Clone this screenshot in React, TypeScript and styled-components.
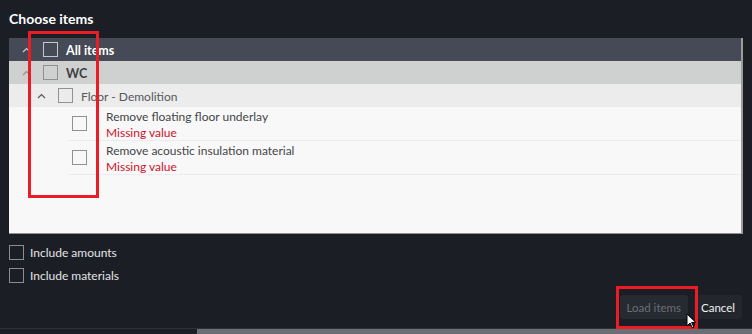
import styled, { createGlobalStyle } from "styled-components";

const GlobalStyle = createGlobalStyle`
  html, body {
    margin: 0;
    padding: 0;
    background: #1b1e25;
    font-family: Lato, "Open Sans", sans-serif;
  }
  * { box-sizing: border-box; }
`;

const Page = styled.div`
  position: relative;
  width: 752px;
  height: 334px;
  overflow: hidden;
  display: flex;
  flex-direction: column;
`;

const Title = styled.h1`
  margin: 0;
  padding: 10px 9px 0;
  height: 38px;
  font-size: 14px;
  line-height: 18px;
  font-weight: 700;
  color: #ffffff;
`;

const Panel = styled.div`
  margin: 0 9px;
  height: 196px;
  background: #f8f8f8;
  border-right: 2px solid #9a9c9f;
  border-bottom: 1px solid #8d8f92;
`;

const Row = styled.div<{ $bg: string; $indent: number }>`
  display: flex;
  align-items: center;
  height: 23px;
  padding-left: ${(p) => p.$indent}px;
  background: ${(p) => p.$bg};
`;

const Chevron = styled.span<{ $color: string }>`
  width: 16px;
  height: 10px;
  margin-right: 9px;
  display: flex;
  align-items: center;
  justify-content: center;
  color: ${(p) => p.$color};
`;

const Box = styled.span<{ $border: string; $bg?: string }>`
  flex: none;
  width: 15px;
  height: 15px;
  border: 1px solid ${(p) => p.$border};
  background: ${(p) => p.$bg || "transparent"};
`;

const RowLabel = styled.span<{ $color: string; $bold?: boolean }>`
  margin-left: 8px;
  padding-top: 2px;
  font-size: ${(p) => (p.$bold ? 12.5 : 12)}px;
  font-weight: ${(p) => (p.$bold ? 700 : 400)};
  color: ${(p) => p.$color};
`;

const Item = styled.div`
  display: flex;
  align-items: center;
  height: 34px;
  margin-left: 59px;
  padding-left: 4px;
  border-bottom: 1px solid #ececec;
`;

const ItemText = styled.div`
  margin-left: 19px;
  padding-top: 2px;
  display: flex;
  flex-direction: column;
  font-size: 12px;
  line-height: 16px;
`;

const ItemName = styled.span`
  color: #444648;
`;

const ItemError = styled.span`
  color: #d0112b;
`;

const Options = styled.div`
  margin-top: 11px;
  padding: 0 9px;
  display: flex;
  flex-direction: column;
  gap: 8px;
`;

const Option = styled.label`
  display: flex;
  align-items: center;
  gap: 6px;
  height: 15px;
  font-size: 12px;
  color: #e4e5e7;
`;

const Actions = styled.div`
  margin-top: 12px;
  padding-right: 10px;
  display: flex;
  justify-content: flex-end;
  gap: 6px;
`;

const Button = styled.button<{ $disabled?: boolean }>`
  height: 24px;
  padding: 0 7px;
  border: none;
  border-radius: 3px;
  font-family: inherit;
  font-size: 11.5px;
  background: ${(p) => (p.$disabled ? "#262a31" : "#23272d")};
  color: ${(p) => (p.$disabled ? "#6b6f76" : "#f2f2f2")};
`;

const BottomStrip = styled.div`
  margin-top: auto;
  height: 6px;
  border-top: 1px solid #2e3137;
  display: flex;
`;

const ScrollThumb = styled.div`
  margin-left: 197px;
  flex: 1;
  background: #6b6e73;
`;

const Highlight = styled.div<{ $x: number; $y: number; $w: number; $h: number }>`
  position: absolute;
  left: ${(p) => p.$x}px;
  top: ${(p) => p.$y}px;
  width: ${(p) => p.$w}px;
  height: ${(p) => p.$h}px;
  border: 3px solid #ec1c24;
  pointer-events: none;
`;

const Cursor = styled.svg`
  position: absolute;
  left: 686px;
  top: 313px;
`;

function ChevronUp() {
  return (
    <svg width="9" height="6" viewBox="0 0 9 6">
      <path d="M1 5 L4.5 1.5 L8 5" fill="none" stroke="currentColor" strokeWidth="1.2" />
    </svg>
  );
}

const items = [
  "Remove floating floor underlay",
  "Remove acoustic insulation material",
];

export default function App() {
  return (
    <>
      <GlobalStyle />
      <Page>
        <Title>Choose items</Title>
        <Panel>
          <Row $bg="#454a56" $indent={9}>
            <Chevron $color="#c9ccd2">
              <ChevronUp />
            </Chevron>
            <Box $border="#c4c7cc" />
            <RowLabel $color="#ffffff" $bold>
              All items
            </RowLabel>
          </Row>
          <Row $bg="#cfd1d0" $indent={9}>
            <Chevron $color="#8f9192">
              <ChevronUp />
            </Chevron>
            <Box $border="#8f9193" />
            <RowLabel $color="#3c3e41" $bold>
              WC
            </RowLabel>
          </Row>
          <Row $bg="#ececec" $indent={24}>
            <Chevron $color="#55585c">
              <ChevronUp />
            </Chevron>
            <Box $border="#8f9193" />
            <RowLabel $color="#55575a">Floor - Demolition</RowLabel>
          </Row>
          {items.map((name) => (
            <Item key={name}>
              <Box $border="#8f9193" />
              <ItemText>
                <ItemName>{name}</ItemName>
                <ItemError>Missing value</ItemError>
              </ItemText>
            </Item>
          ))}
        </Panel>
        <Options>
          <Option>
            <Box $border="#8a8d92" />
            Include amounts
          </Option>
          <Option>
            <Box $border="#8a8d92" />
            Include materials
          </Option>
        </Options>
        <Actions>
          <Button $disabled>Load items</Button>
          <Button>Cancel</Button>
        </Actions>
        <BottomStrip>
          <ScrollThumb />
        </BottomStrip>
        <Highlight $x={28} $y={31} $w={71} $h={167} />
        <Highlight $x={616} $y={286} $w={82} $h={43} />
        <Cursor width="11" height="16" viewBox="0 0 11 16">
          <path d="M1 1 L1 13 L4 10 L6.5 15 L8 14.3 L5.6 9.4 L9.8 9.4 Z" fill="#ffffff" stroke="#000000" strokeWidth="1" />
        </Cursor>
      </Page>
    </>
  );
}
